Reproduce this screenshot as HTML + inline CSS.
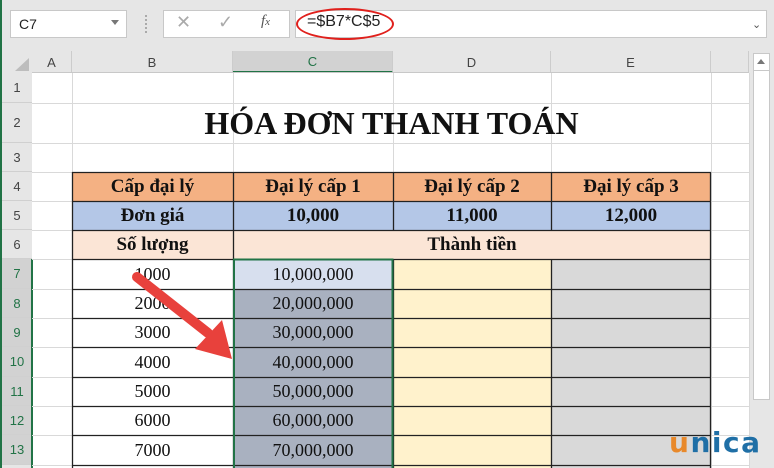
<!DOCTYPE html>
<html><head><meta charset="utf-8"><style>
*{margin:0;padding:0;box-sizing:border-box}
body{width:774px;height:468px;overflow:hidden;background:#e6e6e6;position:relative;font-family:"Liberation Sans",sans-serif}
.a{position:absolute}
.c{position:absolute;display:flex;align-items:center;justify-content:center;font-family:"Liberation Serif",serif;color:#111}
.rh{position:absolute;left:2px;width:30px;display:flex;align-items:center;justify-content:center;font-size:13px;color:#444;border-bottom:1px solid #d0d0d0;background:#e6e6e6}
.ch{position:absolute;top:51px;height:22px;display:flex;align-items:center;justify-content:center;font-size:13px;color:#444;border-right:1px solid #ccc}
.b{font-weight:bold;font-size:19px}
.n{font-size:18px}
</style></head><body>
<div class="a" style="left:0;top:0;width:2px;height:468px;background:#217346"></div>
<div class="a" style="left:10px;top:10px;width:117px;height:28px;background:#fff;border:1px solid #c8c8c8;font-size:14px;padding:5px 0 0 8px;color:#222">C7</div>
<div class="a" style="left:111px;top:20px;width:0;height:0;border-left:4px solid transparent;border-right:4px solid transparent;border-top:5px solid #777"></div>
<div class="a" style="left:145px;top:15px;width:2px;height:18px;border-left:2px dotted #aaa"></div>
<div class="a" style="left:163px;top:10px;width:127px;height:28px;background:#fff;border:1px solid #c8c8c8"></div>
<div class="a" style="left:176px;top:12px;font-size:18px;color:#aaa">✕</div>
<div class="a" style="left:218px;top:12px;font-size:18px;color:#aaa">✓</div>
<div class="a" style="left:261px;top:13px;font-size:15px;color:#555;font-family:'Liberation Serif',serif;font-style:italic">f<span style="font-size:11px">x</span></div>
<div class="a" style="left:295px;top:10px;width:472px;height:28px;background:#fff;border:1px solid #c8c8c8"></div>
<div class="a" style="left:307px;top:13px;font-size:16px;color:#222">=$B7*C$5</div>
<div class="a" style="left:296px;top:8px;width:98px;height:32px;border:2.5px solid #e0201c;border-radius:50%"></div>
<div class="a" style="left:752px;top:18px;font-size:11px;color:#555">⌄</div>
<div class="a" style="left:32px;top:73px;width:717px;height:395px;background:#fff"></div>
<div class="a" style="left:15px;top:58px;width:0;height:0;border-left:14px solid transparent;border-bottom:13px solid #bdbdbd"></div>
<div class="ch" style="left:32px;width:40px">A</div>
<div class="ch" style="left:72px;width:161px">B</div>
<div class="ch" style="left:233px;width:160px;background:#d2d2d2;color:#217346;border-bottom:2px solid #217346">C</div>
<div class="ch" style="left:393px;width:158px">D</div>
<div class="ch" style="left:551px;width:160px">E</div>
<div class="ch" style="left:711px;width:38px"></div>
<div class="a" style="left:32px;top:72px;width:717px;height:1px;background:#c8c8c8"></div>
<div class="a" style="left:753px;top:53px;width:17px;height:347px;background:#fff;border:1px solid #c8c8c8"></div>
<div class="a" style="left:757px;top:59px;width:0;height:0;border-left:4px solid transparent;border-right:4px solid transparent;border-bottom:5px solid #777"></div>
<div class="a" style="left:753px;top:70px;width:17px;height:1px;background:#c8c8c8"></div>
<div class="rh" style="top:73px;height:30px">1</div>
<div class="rh" style="top:103px;height:40px">2</div>
<div class="rh" style="top:143px;height:29px">3</div>
<div class="rh" style="top:172px;height:29px">4</div>
<div class="rh" style="top:201px;height:29px">5</div>
<div class="rh" style="top:230px;height:29px">6</div>
<div class="rh" style="top:259px;height:30px;background:#d2d2d2;color:#217346">7</div>
<div class="rh" style="top:289px;height:29px;background:#d2d2d2;color:#217346">8</div>
<div class="rh" style="top:318px;height:29px;background:#d2d2d2;color:#217346">9</div>
<div class="rh" style="top:347px;height:30px;background:#d2d2d2;color:#217346">10</div>
<div class="rh" style="top:377px;height:29px;background:#d2d2d2;color:#217346">11</div>
<div class="rh" style="top:406px;height:29px;background:#d2d2d2;color:#217346">12</div>
<div class="rh" style="top:435px;height:30px;background:#d2d2d2;color:#217346">13</div>
<div class="a" style="left:31px;top:259px;width:2px;height:209px;background:#217346"></div>
<svg class="a" style="left:0;top:0" width="774" height="468">
<g stroke="#d9d9d9" stroke-width="1">
<line x1="32" y1="103.5" x2="749" y2="103.5"/><line x1="32" y1="143.5" x2="749" y2="143.5"/><line x1="32" y1="172.5" x2="749" y2="172.5"/>
<line x1="32" y1="201.5" x2="749" y2="201.5"/><line x1="32" y1="230.5" x2="749" y2="230.5"/><line x1="32" y1="259.5" x2="749" y2="259.5"/>
<line x1="32" y1="289.5" x2="749" y2="289.5"/><line x1="32" y1="318.5" x2="749" y2="318.5"/><line x1="32" y1="347.5" x2="749" y2="347.5"/>
<line x1="32" y1="377.5" x2="749" y2="377.5"/><line x1="32" y1="406.5" x2="749" y2="406.5"/><line x1="32" y1="435.5" x2="749" y2="435.5"/><line x1="32" y1="465.5" x2="749" y2="465.5"/>
<line x1="72.5" y1="73" x2="72.5" y2="468"/><line x1="233.5" y1="73" x2="233.5" y2="172"/><line x1="393.5" y1="73" x2="393.5" y2="172"/><line x1="551.5" y1="73" x2="551.5" y2="172"/><line x1="711.5" y1="73" x2="711.5" y2="468"/><line x1="749.5" y1="73" x2="749.5" y2="468"/>
</g></svg>
<div class="a" style="left:72px;top:172px;width:639px;height:29px;background:#f4b183"></div>
<div class="a" style="left:72px;top:201px;width:639px;height:29px;background:#b4c7e7"></div>
<div class="a" style="left:72px;top:230px;width:639px;height:29px;background:#fbe5d6"></div>
<div class="a" style="left:393px;top:259px;width:158px;height:209px;background:#fff2cc"></div>
<div class="a" style="left:551px;top:259px;width:160px;height:209px;background:#d9d9d9"></div>
<div class="a" style="left:233px;top:259px;width:160px;height:30px;background:#d7dfee"></div>
<div class="a" style="left:233px;top:289px;width:160px;height:179px;background:#a9b1c0"></div>
<svg class="a" style="left:0;top:0" width="774" height="468">
<g stroke="#222" stroke-width="1.3">
<line x1="72" y1="172.5" x2="711" y2="172.5"/><line x1="72" y1="201.5" x2="711" y2="201.5"/><line x1="72" y1="230.5" x2="711" y2="230.5"/>
<line x1="72" y1="259.5" x2="711" y2="259.5"/><line x1="72" y1="289.5" x2="711" y2="289.5"/><line x1="72" y1="318.5" x2="711" y2="318.5"/>
<line x1="72" y1="347.5" x2="711" y2="347.5"/><line x1="72" y1="377.5" x2="711" y2="377.5"/><line x1="72" y1="406.5" x2="711" y2="406.5"/>
<line x1="72" y1="435.5" x2="711" y2="435.5"/><line x1="72" y1="465.5" x2="711" y2="465.5"/>
<line x1="72.5" y1="172" x2="72.5" y2="468"/><line x1="233.5" y1="172" x2="233.5" y2="468"/>
<line x1="393.5" y1="172" x2="393.5" y2="230"/><line x1="393.5" y1="259" x2="393.5" y2="468"/>
<line x1="551.5" y1="172" x2="551.5" y2="230"/><line x1="551.5" y1="259" x2="551.5" y2="468"/><line x1="710.5" y1="172" x2="710.5" y2="468"/>
</g>
<rect x="234" y="259.5" width="158.5" height="210" fill="none" stroke="#217346" stroke-width="2"/>
</svg>
<div class="c" style="left:72px;top:103px;width:639px;height:40px;font-weight:bold;font-size:32px">HÓA ĐƠN THANH TOÁN</div>
<div class="c b" style="left:72px;top:172px;width:161px;height:29px">Cấp đại lý</div>
<div class="c b" style="left:233px;top:172px;width:160px;height:29px">Đại lý cấp 1</div>
<div class="c b" style="left:393px;top:172px;width:158px;height:29px">Đại lý cấp 2</div>
<div class="c b" style="left:551px;top:172px;width:160px;height:29px">Đại lý cấp 3</div>
<div class="c b" style="left:72px;top:201px;width:161px;height:29px">Đơn giá</div>
<div class="c b" style="left:233px;top:201px;width:160px;height:29px">10,000</div>
<div class="c b" style="left:393px;top:201px;width:158px;height:29px">11,000</div>
<div class="c b" style="left:551px;top:201px;width:160px;height:29px">12,000</div>
<div class="c b" style="left:72px;top:230px;width:161px;height:29px">Số lượng</div>
<div class="c b" style="left:233px;top:230px;width:478px;height:29px">Thành tiền</div>
<div class="c n" style="left:72px;top:259px;width:161px;height:30px">1000</div>
<div class="c n" style="left:72px;top:289px;width:161px;height:29px">2000</div>
<div class="c n" style="left:72px;top:318px;width:161px;height:29px">3000</div>
<div class="c n" style="left:72px;top:347px;width:161px;height:30px">4000</div>
<div class="c n" style="left:72px;top:377px;width:161px;height:29px">5000</div>
<div class="c n" style="left:72px;top:406px;width:161px;height:29px">6000</div>
<div class="c n" style="left:72px;top:435px;width:161px;height:30px">7000</div>
<div class="c n" style="left:233px;top:259px;width:160px;height:30px">10,000,000</div>
<div class="c n" style="left:233px;top:289px;width:160px;height:29px">20,000,000</div>
<div class="c n" style="left:233px;top:318px;width:160px;height:29px">30,000,000</div>
<div class="c n" style="left:233px;top:347px;width:160px;height:30px">40,000,000</div>
<div class="c n" style="left:233px;top:377px;width:160px;height:29px">50,000,000</div>
<div class="c n" style="left:233px;top:406px;width:160px;height:29px">60,000,000</div>
<div class="c n" style="left:233px;top:435px;width:160px;height:30px">70,000,000</div>
<svg class="a" style="left:0;top:0" width="774" height="468">
<line x1="137" y1="277" x2="208" y2="333" stroke="#e8413c" stroke-width="10" stroke-linecap="round"/>
<polygon points="232,359 195,349 222,320" fill="#e8413c"/>
</svg>
<div class="a" style="left:669px;top:426px;font-size:28px;line-height:34px;font-weight:bold;letter-spacing:1.5px;font-family:'DejaVu Sans',sans-serif;color:#1f6fa6"><span style="color:#e8892b">u</span>nica</div>
</body></html>
